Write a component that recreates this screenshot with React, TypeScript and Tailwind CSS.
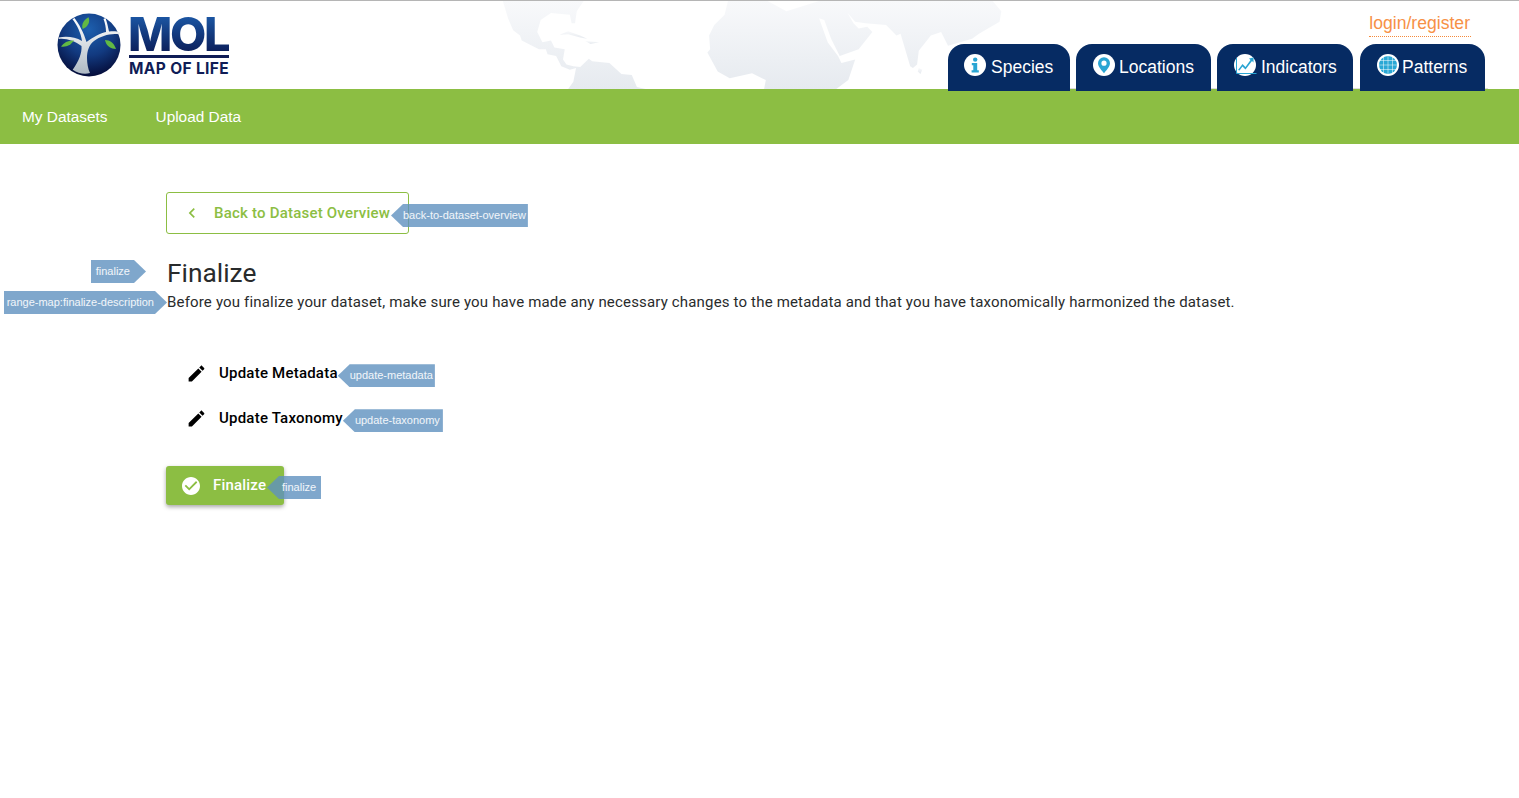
import type { ReactNode } from "react";

const tabs = [
  { label: "Species", icon: <InfoIcon />, cls: "w-[122px] pl-[16px] gap-[5px]" },
  { label: "Locations", icon: <PinIcon />, cls: "w-[135px] pl-[17px] gap-[4px]" },
  { label: "Indicators", icon: <ChartIcon />, cls: "w-[136px] pl-[17px] gap-[4px]" },
  { label: "Patterns", icon: <GridIcon />, cls: "ml-[1px] w-[125px] pl-[17px] gap-[3px]" },
];

function InfoIcon() {
  return (
    <svg width="22" height="22" viewBox="0 0 22 22">
      <circle cx="11" cy="11" r="11" fill="#fff" />
      <circle cx="11.2" cy="5.6" r="2.2" fill="#2aa5d3" />
      <path d="M7.8 9h5.4v7.2h1.6v2.2H7.6v-2.2h1.7v-5H7.8z" fill="#2aa5d3" />
    </svg>
  );
}

function PinIcon() {
  return (
    <svg width="22" height="22" viewBox="0 0 22 22">
      <circle cx="11" cy="11" r="11" fill="#fff" />
      <path
        fillRule="evenodd"
        d="M11 3.200a6 6 0 0 0-6 6c0 3.600 4 7.400 6 10 2-2.600 6-6.400 6-10a6 6 0 0 0-6-6zm0 3.400a2.600 2.600 0 1 1 0 5.200 2.600 2.600 0 0 1 0-5.200z"
        fill="#2aa5d3"
      />
    </svg>
  );
}

function ChartIcon() {
  return (
    <svg width="23" height="22" viewBox="0 0 23 22">
      <circle cx="11" cy="11" r="11" fill="#fff" />
      <path d="M4 16l4.500-6 3 3 5-7-1.500-1.500 4.500-1v5l-1.500-1.500-6.500 8.500-3-3-3 4z" fill="#2aa5d3" />
      <path d="M2.500 4v15.500h20" stroke="#2aa5d3" strokeWidth="1" fill="none" />
    </svg>
  );
}

function GridIcon() {
  return (
    <svg width="22" height="22" viewBox="0 0 22 22">
      <circle cx="11" cy="11" r="11" fill="#fff" />
      <circle cx="11" cy="11" r="9" fill="#2aa8d5" />
      <path d="M1 6.500h20M1 11h20M1 15.500h20M6.500 1v20M11 1v20M15.500 1v20" stroke="#fff" strokeWidth="0.500" />
    </svg>
  );
}

function Globe() {
  return (
    <svg width="64" height="64" viewBox="0 0 64 64" className="shrink-0">
      <defs>
        <radialGradient id="globeFill" cx="50%" cy="25%" r="75%">
          <stop offset="0%" stopColor="#1d5fae" />
          <stop offset="55%" stopColor="#123a80" />
          <stop offset="100%" stopColor="#050d3a" />
        </radialGradient>
        <linearGradient id="trunkFill" x1="0" y1="0" x2="0" y2="1">
          <stop offset="0%" stopColor="#ffffff" />
          <stop offset="100%" stopColor="#aeb9c3" />
        </linearGradient>
      </defs>
      <circle cx="32" cy="32" r="31.500" fill="url(#globeFill)" />
      <path
        d="M15.700 56.700C22 48 25 40 24.500 33C18 28 9 25 1.700 26L1.700 24.500C10 23 18 24 25 28C24 20 20 12 15.500 6.200L17.500 5C22 11 27 20 29.500 29C36 24 44 20 49 19C49 14 48 10 46.500 6L48.500 5C50 9 51 14 52 18.500C56 18 60 18 63 19.500L62.500 21.500C54 20 44 23 37 28C32 32 30 38 30 45C30 50 31 56 33 60C27 62 21 60 15.700 56.700Z"
        fill="url(#trunkFill)"
      />
      <path d="M25.700 16C24 11 27 7 31.500 4.300C33.500 9 31 14 25.700 16Z" fill="#62b944" />
      <path d="M4 33.500C7 29 12 27 17 27.500C14 32 9 34.500 4 33.500Z" fill="#62b944" />
      <path d="M48 27C53 27 57 30 59 36C54 36 49 33 48 27Z" fill="#62b944" />
    </svg>
  );
}

function Logo() {
  return (
    <div className="flex items-start pl-[57px] pt-[12px]">
      <Globe />
      <div className="ml-[8px] flex w-[100px] flex-col">
        <span className="mt-[1px] -ml-[1px] bg-gradient-to-b from-[#1d5aa8] to-[#0b1c58] bg-clip-text font-['Inter',sans-serif] text-[47px] leading-[40px] font-extrabold tracking-[-2.300px] whitespace-nowrap text-transparent">
          MOL
        </span>
        <div className="mt-[1px] h-[3px] w-full bg-[#0f1c56]" />
        <span className="mt-[2px] font-['Inter',sans-serif] text-[15.500px] leading-[17px] font-bold tracking-[0.350px] whitespace-nowrap text-[#0f1c56]">
          MAP OF LIFE
        </span>
      </div>
    </div>
  );
}

function WorldMap() {
  return (
    <svg
      width="540"
      height="88"
      viewBox="0 0 1568 256"
      className="pointer-events-none absolute top-0 left-[480px]"
    >
      <defs>
        <linearGradient id="mapFill" x1="0" y1="0" x2="0" y2="1">
          <stop offset="0%" stopColor="#f8f9fb" />
          <stop offset="100%" stopColor="#e6eaef" />
        </linearGradient>
      </defs>
      <g fill="url(#mapFill)">
        <path d="M65 0L80 50 95 85 115 100 120 115 170 140 190 140 195 155 220 160 235 190 260 200 278 195 270 235 255 256H480L455 250 440 215 410 212 375 180 325 175 315 168 290 192 270 190 250 185 240 170 245 140 215 135 205 115 180 120 165 90 175 55 205 35 260 40 265 65 275 65 280 30 300 0Z" />
        <path d="M230 98L255 88 290 100 310 110 290 106 255 97Z" />
        <path d="M305 116L345 120 320 125Z" />
        <path d="M720 0L710 40 680 70 665 100 668 140 660 150 690 205 725 225 790 210 830 230 825 256H1035L1070 230 1090 170 1050 180 1040 160 1010 120 985 50 1000 55 1020 110 1045 160 1100 140 1140 90 1125 75 1100 80 1085 65 1068 35 1090 60 1120 65 1180 70 1210 100 1222 95 1250 190 1258 195 1270 185 1275 145 1310 100 1340 90 1360 130 1430 110 1450 95 1510 60 1515 30 1490 0H985L890 30 835 0Z" />
        <path d="M1275 195L1285 200 1280 212 1272 205Z" />
      </g>
    </svg>
  );
}

function Tag({ children, side, className }: { children: ReactNode; side: "left" | "right"; className: string }) {
  return (
    <span
      className={`absolute z-10 flex h-[23px] items-center bg-[#5f91bf]/80 font-['Liberation_Sans',sans-serif] text-[11px] leading-none font-normal tracking-normal whitespace-nowrap text-white/90 ${
        side === "left"
          ? "[clip-path:polygon(12px_0,100%_0,100%_100%,12px_100%,0_50%)]"
          : "[clip-path:polygon(0_0,calc(100%-12px)_0,100%_50%,calc(100%-12px)_100%,0_100%)]"
      } ${className}`}
    >
      {children}
    </span>
  );
}

function EditRow({ label, tag, tagPad }: { label: string; tag: string; tagPad: string }) {
  return (
    <div className="flex h-[45px] items-center pl-[20px]">
      <svg width="21" height="21" viewBox="0 0 24 24" fill="#000" className="mb-[1px]">
        <path d="M3 17.250V21h3.750L17.810 9.940l-3.750-3.750L3 17.250zM20.710 7.040c.39-.39.39-1.020 0-1.410l-2.340-2.340c-.39-.39-1.020-.39-1.410 0l-1.830 1.830 3.750 3.750 1.830-1.830z" />
      </svg>
      <span className="relative ml-[12px] text-[15px] font-medium tracking-[0.220px] text-black">
        {label}
        <Tag side="left" className={`top-[2px] left-full pl-[12px] ${tagPad}`}>
          {tag}
        </Tag>
      </span>
    </div>
  );
}

export default function App() {
  return (
    <div className="min-h-[798px] bg-white font-['Roboto',sans-serif] text-[#292b2c]">
      <header className="relative flex h-[89px] justify-between border-t border-[#b5b5b5]">
        <WorldMap />
        <div className="relative">
          <Logo />
        </div>
        <div className="relative flex flex-col items-end pr-[34px]">
          <a className="mt-[11px] mr-[14px] border-b border-dotted border-[#f58a3c] pr-[1px] pb-[2px] font-['Liberation_Sans',sans-serif] text-[17.600px] leading-[22px] text-[#f79146]">
            login/register
          </a>
          <nav className="relative z-10 mt-[7px] flex gap-[6px]">
            <div className="absolute right-[-3px] bottom-[2px] left-0 h-[1px] bg-[#dcdcdc]" />
            {tabs.map((tab) => (
              <a
                key={tab.label}
                className={`relative flex h-[47px] items-start rounded-t-[16px] bg-[#062b63] pt-[10px] font-['Liberation_Sans',sans-serif] text-[17.500px] leading-[26px] text-white ${tab.cls}`}
              >
                {tab.icon}
                <span>{tab.label}</span>
              </a>
            ))}
          </nav>
        </div>
      </header>

      <div className="flex h-[55px] items-center gap-[48px] bg-[#8cbe43] pt-[1px] pl-[22px] font-['Liberation_Sans',sans-serif] text-[15.400px] text-white">
        <a>My Datasets</a>
        <a>Upload Data</a>
      </div>

      <main className="pt-[48px] pl-[166px]">
        <a className="relative flex h-[42px] w-[243px] items-center rounded-[3px] border border-[#8cbe43] pl-[15px] text-[15px] font-medium tracking-[0.210px] text-[#8cbe43]">
          <svg width="20" height="20" viewBox="0 0 24 24" fill="currentColor">
            <path d="M15.410 7.410L14 6l-6 6 6 6 1.410-1.410L10.830 12z" />
          </svg>
          <span className="ml-[12px]">Back to Dataset Overview</span>
          <Tag side="left" className="top-[11px] left-[224px] pr-[2px] pl-[12px]">
            back-to-dataset-overview
          </Tag>
        </a>

        <h1 className="relative mt-[23px] pl-[1px] text-[26.300px] leading-[32px] font-normal">
          Finalize
          <Tag side="right" className="top-[3px] right-[100%] mr-[20px] pr-[16px] pl-[5px]">
            finalize
          </Tag>
        </h1>

        <p className="relative mt-[1px] pl-[1px] text-[15px] leading-[24px] tracking-[0.170px]">
          Before you finalize your dataset, make sure you have made any necessary changes to the metadata and that you
          have taxonomically harmonized the dataset.
          <Tag side="right" className="top-[1px] right-[100%] mr-[-1px] pr-[13px] pl-[3px]">
            range-map:finalize-description
          </Tag>
        </p>

        <div className="mt-[37px]">
          <EditRow label="Update Metadata" tag="update-metadata" tagPad="pr-[2px]" />
          <EditRow label="Update Taxonomy" tag="update-taxonomy" tagPad="pr-[3px]" />
        </div>

        <a className="relative mt-[25px] flex h-[39px] w-[118px] items-center rounded-[3px] bg-[#8cbe43] pl-[16px] text-[15px] font-medium tracking-[0.200px] text-white shadow-[0_2px_4px_rgba(0,0,0,0.35)]">
          <svg width="18" height="18" viewBox="2 2 20 20" fill="currentColor">
            <path d="M12 2C6.480 2 2 6.480 2 12s4.480 10 10 10 10-4.480 10-10S17.520 2 12 2zm-2 15l-5-5 1.410-1.410L10 14.170l7.590-7.590L19 8l-9 9z" />
          </svg>
          <span className="ml-[13px]">Finalize</span>
          <Tag side="left" className="top-[10px] left-[101px] pr-[5px] pl-[15px]">
            finalize
          </Tag>
        </a>
      </main>
    </div>
  );
}
